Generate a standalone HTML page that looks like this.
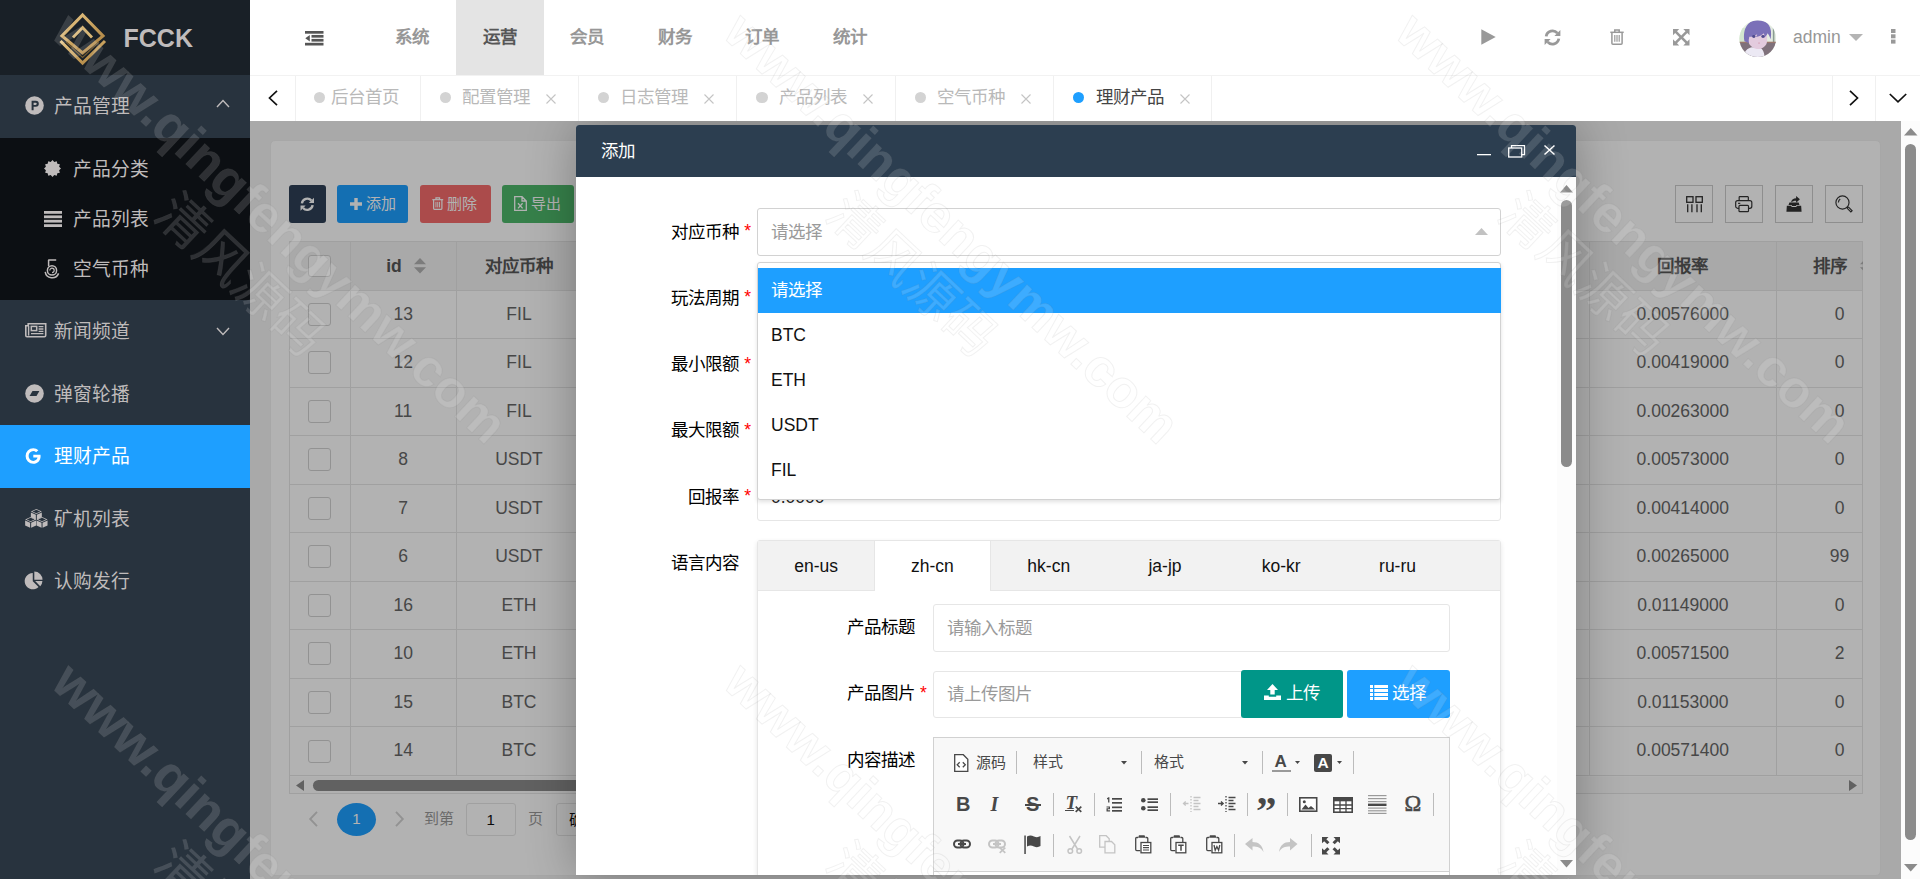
<!DOCTYPE html>
<html lang="zh-CN"><head><meta charset="utf-8"><title>FCCK</title><style>
*{margin:0;padding:0;box-sizing:border-box}
html,body{width:1920px;height:879px;overflow:hidden;background:#fff}
body{font-family:"Liberation Sans",sans-serif;font-size:17.5px;color:#333;position:relative}
.a{position:absolute}
.t{position:absolute;white-space:nowrap;line-height:24px;height:24px}
.b{font-weight:bold}
svg{position:absolute;overflow:visible}
#side{left:0;top:0;width:250px;height:879px;background:#28333e}
#logo{left:0;top:0;width:250px;height:75px;background:#192027}
#sub{left:0;top:137.5px;width:250px;height:162.5px;background:#0c0f13}
#act{left:0;top:425px;width:250px;height:62.5px;background:#1e9fff}
.m{color:#bfbbbb;font-size:18.75px}
#hdr{left:250px;top:0;width:1670px;height:75px;background:#fff}
#nthis{left:456px;top:0;width:87.5px;height:75px;background:#e4e4e4}
.n{color:#979797;font-weight:bold;font-size:17.5px}
#tabs{left:250px;top:75px;width:1670px;height:46px;background:#fff;border-top:1px solid #f2f2f2}
.vl{position:absolute;top:76px;width:1px;height:45px;background:#f0f0f0}
.tt{color:#b9b9b9;font-size:17.5px}
.dot{position:absolute;width:11.25px;height:11.25px;border-radius:50%;background:#d3d3d3;top:91.8px}
#frame{left:250px;top:121px;width:1650.5px;height:758px;background:#f2f2f2;overflow:hidden}
#card{left:19.5px;top:19px;width:1611.5px;height:735.6px;background:#fff;border-radius:5px;border:1px solid #f0f0f0}
#mask{left:0;top:0;width:1650.5px;height:758px;background:rgba(0,0,0,.3)}
.btn{position:absolute;top:64px;height:37.5px;border-radius:3px;color:#fff;font-size:15px}
.tb{position:absolute;top:64px;width:37.5px;height:37.5px;border:1px solid #ccc}
.th{color:#565656;font-weight:bold}
.td{color:#666}
.hl{position:absolute;height:1px;background:#e6e6e6}
.vt{position:absolute;width:1px;background:#e6e6e6}
.cb{position:absolute;width:22.5px;height:22.5px;border:1px solid #d2d2d2;border-radius:3px;background:#fff}
#modal{left:325.5px;top:4px;width:1000.25px;height:749.8px;background:#fff;box-shadow:1px 1px 50px rgba(0,0,0,.3);border-radius:3px 3px 0 0}
#mtitle{left:0;top:0;width:1000.25px;height:52px;background:#2c3e50;border-radius:3px 3px 0 0}
#mbody{left:0;top:52px;width:1000.25px;height:697.8px;overflow:hidden;background:#fff}
.lab{color:#000;font-size:17.5px}
.red{color:#f00}
.inp{position:absolute;border:1px solid #e6e6e6;border-radius:3px;background:#fff}
.ph{color:#9a9a9a}
.sb{position:absolute;background:#fcfcfc}
.thumb{position:absolute;background:#8b8b8b;border-radius:6px}
.wm{position:absolute;white-space:nowrap;transform-origin:0 0;color:rgba(255,255,255,.14);-webkit-text-stroke:1px rgba(120,120,120,.10);pointer-events:none}
</style></head><body>
<div id="side" class="a">
<div id="logo" class="a"></div>
<svg style="left:58px;top:12px" width="50" height="54" viewBox="0 0 50 54">
<defs><linearGradient id="g1" x1="0" y1="0" x2="1" y2="1"><stop offset="0" stop-color="#e9c98b"/><stop offset=".5" stop-color="#c9a25e"/><stop offset="1" stop-color="#a67c3c"/></linearGradient></defs>
<path d="M24.6 3 L45 24 L24.6 41 L4 24 Z" fill="none" stroke="url(#g1)" stroke-width="3.1" stroke-linejoin="miter"/>
<path d="M15 25.5 L24.6 15.5 L34 25.5" fill="none" stroke="#d9b776" stroke-width="2.8"/>
<path d="M2.5 29 L24.6 51 L47 29" fill="none" stroke="url(#g1)" stroke-width="3.1"/>
<path d="M8 30 L24.6 45.5 L41 30" fill="none" stroke="#8a6a35" stroke-width="1.2" opacity=".8"/>
</svg>
<div class="t b" style="left:123.5px;top:23.20px;color:#bfbbbb;font-size:25px;line-height:30px;height:30px">FCCK</div>
<div id="sub" class="a"></div><div id="act" class="a"></div>
<div class="t m" style="left:53.5px;top:94.80px;">产品管理</div>
<div class="t m" style="left:72.75px;top:157.80px;">产品分类</div>
<div class="t m" style="left:72.75px;top:207.80px;">产品列表</div>
<div class="t m" style="left:72.75px;top:257.80px;">空气币种</div>
<div class="t m" style="left:53.5px;top:320.30px;">新闻频道</div>
<div class="t m" style="left:53.5px;top:382.80px;">弹窗轮播</div>
<div class="t m" style="left:53.5px;top:445.30px;color:#fff">理财产品</div>
<div class="t m" style="left:53.5px;top:507.80px;">矿机列表</div>
<div class="t m" style="left:53.5px;top:570.30px;">认购发行</div>
<svg style="left:24.5px;top:96px" width="19" height="19" viewBox="0 0 19 19"><circle cx="9.5" cy="9.5" r="9.3" fill="#bfbbbb"/><path d="M6.6 4.8h4.2a3 3 0 0 1 0 6H8.6v3.4h-2z M8.6 6.7v2.3h2a1.15 1.15 0 0 0 0-2.3z" fill="#28333e" fill-rule="evenodd"/></svg>
<svg style="left:216px;top:98.5px" width="14" height="9" viewBox="0 0 14 9"><path d="M1 8 L7 1.6 L13 8" fill="none" stroke="#bfbbbb" stroke-width="1.4"/></svg>
<svg style="left:216px;top:327px" width="14" height="9" viewBox="0 0 14 9"><path d="M1 1 L7 7.4 L13 1" fill="none" stroke="#bfbbbb" stroke-width="1.4"/></svg>
<svg style="left:43.6px;top:160.3px" width="17" height="17" viewBox="0 0 16.4 16.4"><polygon points="16.40,8.20 14.58,9.91 15.30,12.30 12.87,12.87 12.30,15.30 9.91,14.58 8.20,16.40 6.49,14.58 4.10,15.30 3.53,12.87 1.10,12.30 1.82,9.91 0.00,8.20 1.82,6.49 1.10,4.10 3.53,3.53 4.10,1.10 6.49,1.82 8.20,0.00 9.91,1.82 12.30,1.10 12.87,3.53 15.30,4.10 14.58,6.49" fill="#bfbbbb"/></svg>
<svg style="left:43.6px;top:210.5px" width="18" height="16" viewBox="0 0 18 16"><g fill="#bfbbbb"><rect y="0" width="18" height="2.8"/><rect y="4.4" width="18" height="2.8"/><rect y="8.8" width="18" height="2.8"/><rect y="13.2" width="18" height="2.8"/></g></svg>
<svg style="left:44px;top:259px" width="16" height="20" viewBox="0 0 16 20"><g fill="none" stroke="#bfbbbb" stroke-width="1.5"><path d="M4.2 1h8"/><path d="M4.6 1v6.2"/><circle cx="8" cy="11.4" r="4.6"/><path d="M1.2 12.8a7 7 0 0 0 13.4 1.6"/><path d="M5.8 11.4a2.2 2.2 0 1 1 2.2 2.2" stroke-width="1.2"/></g></svg>
<svg style="left:24.5px;top:322.5px" width="21.500" height="14.500" viewBox="0 0 21.500 14.500"><path d="M3.200 .8h17.500v11.700a1.200 1.200 0 0 1-1.200 1.200H2A1.200 1.200 0 0 1 .8 12.500V2.800h2.400z" fill="none" stroke="#bfbbbb" stroke-width="1.600"/><path d="M3.600 2.800v9.800" stroke="#bfbbbb" stroke-width="1.400"/><rect x="6.300" y="3.400" width="5.400" height="4.200" fill="none" stroke="#bfbbbb" stroke-width="1.500"/><g stroke="#bfbbbb" stroke-width="1.300"><path d="M13.600 3.700h4.800M13.600 6h4.800M13.600 8.300h4.800M6 10.700h12.400"/></g></svg>
<svg style="left:24.5px;top:384px" width="19" height="19" viewBox="0 0 19 19"><circle cx="9.500" cy="9.500" r="9.300" fill="#bfbbbb"/><path d="M4.600 11.900 L7.500 6.900 H14.400 L11.500 11.900z" fill="#28333e"/></svg>
<svg style="left:24.5px;top:447px" width="17" height="18" viewBox="0 0 17 18"><path d="M15.6 9.2c0 4.4-3 7.6-7.3 7.6A7.7 7.7 0 0 1 .6 9a7.7 7.7 0 0 1 7.7-7.8c2 0 3.700.750 5.050 2.000L11.100 5.300c-.8-.8-1.800-1.200-2.800-1.200A4.800 4.800 0 0 0 3.600 9a4.800 4.800 0 0 0 4.700 4.900c2.500 0 3.900-1.500 4.200-3.300H8.300V7.800h7.150c.1.450.15.900.15 1.400z" fill="#fff"/></svg>
<svg style="left:24.600px;top:509px" width="22.700" height="19" viewBox="0 0 22.700 19"><path d="M11.35 0l5.500 2.500l-5.500 2.500l-5.500-2.500z" fill="#bfbbbb"/><path d="M11.35 0.75l3.900 1.750l-3.900 1.750l-3.900-1.750z" fill="#28333e"/><path d="M5.85 3.4l5 2.300v5l-5-2.400z" fill="#bfbbbb"/><path d="M16.85 3.4l-5 2.300v5l5-2.400z" fill="#bfbbbb"/><path d="M5.65 8.1l5.500 2.500l-5.500 2.500l-5.500-2.500z" fill="#bfbbbb"/><path d="M5.65 8.85l3.900 1.750l-3.900 1.750l-3.900-1.750z" fill="#28333e"/><path d="M0.15000000000000036 11.5l5 2.300v5l-5-2.400z" fill="#bfbbbb"/><path d="M11.15 11.5l-5 2.300v5l5-2.400z" fill="#bfbbbb"/><path d="M17.05 8.1l5.500 2.500l-5.500 2.500l-5.500-2.500z" fill="#bfbbbb"/><path d="M17.05 8.85l3.900 1.750l-3.900 1.750l-3.900-1.750z" fill="#28333e"/><path d="M11.55 11.5l5 2.300v5l-5-2.400z" fill="#bfbbbb"/><path d="M22.55 11.5l-5 2.300v5l5-2.400z" fill="#bfbbbb"/></svg>
<svg style="left:24.800px;top:570.800px" width="18" height="18" viewBox="0 0 19 19"><path d="M8.200 2.100v8.600l6.100 6.100A8.600 8.600 0 1 1 8.200 2.100z" fill="#bfbbbb"/><path d="M9.800.5a8.700 8.700 0 0 1 8.700 8.700H9.800z" fill="#bfbbbb"/><path d="M10.700 10.600h7.700a8.600 8.600 0 0 1-2.300 5.400z" fill="#bfbbbb"/></svg>
</div>
<div id="hdr" class="a"></div><div id="nthis" class="a"></div>
<svg style="left:304.5px;top:30.600px" width="18.500" height="14.500" viewBox="0 0 18.500 14.500"><g fill="#565656"><rect x="0" y="0" width="18.500" height="2.700"/><rect x="6.500" y="3.950" width="12" height="2.700"/><rect x="6.500" y="7.900" width="12" height="2.700"/><rect x="0" y="11.800" width="18.500" height="2.700"/><path d="M.3 7.250 L4.800 4 V10.500z"/></g></svg>
<div class="t n" style="left:312.00px;width:200px;text-align:center;top:25.00px;">系统</div>
<div class="t n" style="left:399.50px;width:200px;text-align:center;top:25.00px;color:#565656">运营</div>
<div class="t n" style="left:487.00px;width:200px;text-align:center;top:25.00px;">会员</div>
<div class="t n" style="left:574.50px;width:200px;text-align:center;top:25.00px;">财务</div>
<div class="t n" style="left:662.00px;width:200px;text-align:center;top:25.00px;">订单</div>
<div class="t n" style="left:749.50px;width:200px;text-align:center;top:25.00px;">统计</div>
<svg style="left:1480.8px;top:29px" width="15" height="16" viewBox="0 0 15 16"><path d="M.3.3 L14.700 8 L.3 15.700z" fill="#999"/></svg>
<svg style="left:1544px;top:28.5px" width="17" height="17" viewBox="0 0 17 17"><g fill="none" stroke="#999" stroke-width="2.800"><path d="M2.200 7.400A6.400 6.400 0 0 1 13.400 4.200"/><path d="M14.800 9.600A6.400 6.400 0 0 1 3.600 12.800"/></g><path d="M16.400 1 V7 H10.400z" fill="#999"/><path d="M.6 16 V10 H6.600z" fill="#999"/></svg>
<svg style="left:1610px;top:28.5px" width="14" height="16" viewBox="0 0 14 16"><g fill="none" stroke="#999" stroke-width="1.5"><path d="M.3 3.300h13.400"/><path d="M4.800 3V1h4.400v2"/><path d="M1.900 3.600v10.600a1 1 0 0 0 1 1h8.200a1 1 0 0 0 1-1V3.600"/></g><g stroke="#999" stroke-width="1.2"><path d="M4.800 6v6.800M7 6v6.800M9.200 6v6.800"/></g></svg>
<svg style="left:1673px;top:29px" width="16.5" height="16.5" viewBox="0 0 16 16"><g fill="#999"><path d="M0 0h6L3.900 2.100 8 6.200 12.100 2.100 10 0h6v6l-2.100-2.100L9.800 8l4.100 4.100L16 10v6h-6l2.100-2.100L8 9.800 3.900 13.900 6 16H0v-6l2.100 2.100L6.200 8 2.100 3.900 0 6z"/></g></svg>
<svg style="left:1738.5px;top:20px" width="37.500" height="37.500" viewBox="0 0 38 38"><defs><clipPath id="av"><circle cx="19" cy="19" r="18.600"/></clipPath></defs><g clip-path="url(#av)"><rect width="38" height="38" fill="#e4eee0"/><rect x="0" y="8" width="7" height="15" fill="#d3e6cf"/><rect x="31" y="6" width="7" height="17" fill="#e3ebe2"/><rect x="34.300" y="6" width="1.600" height="17" fill="#8a9c92"/><rect y="22.600" width="38" height="16" fill="#7f717b"/><rect y="22" width="38" height="1.200" fill="#9a7468"/><path d="M4.500 38c.5-6 3.500-9.500 8.500-10.500l8 .5c3 1 4.500 4 5 10z" fill="#ece9f4"/><path d="M9.500 13c0-3 19-3 19 0v8c0 5-5 8.500-9 8.500S9.500 26 9.500 21z" fill="#e3cbde"/><path d="M5.500 21.500C3.500 9 9 0 19 0s15.500 7 13 19.500c-.8-2.500-1.800-4.500-3-6-1 2-2 3.500-3.500 4.500.3-1.500.3-3-.2-4.500-2 2-5 3.300-8.300 3.600.8-.8 1.300-1.700 1.500-2.700-2.500 1.800-5.500 2.700-8 2.600-.5 1.500-.8 3.500-.5 6.500-1.500-.5-3-1.200-4.500-2z" fill="#7b70b8"/><ellipse cx="15" cy="16.800" rx="1.700" ry="1.500" fill="#4f4a8c"/><ellipse cx="24.300" cy="16.800" rx="1.700" ry="1.500" fill="#4f4a8c"/><ellipse cx="20.300" cy="23.300" rx=".8" ry=".6" fill="#d08aa0"/></g></svg>
<div class="t " style="left:1793px;top:24.80px;color:#979797;font-size:17.5px">admin</div>
<svg style="left:1848.7px;top:34px" width="14" height="7" viewBox="0 0 14 7"><path d="M0 0h14L7 7z" fill="#b4b4b4"/></svg>
<svg style="left:1890.5px;top:28.700px" width="5" height="15" viewBox="0 0 5 15"><g fill="#999"><rect y="0" width="4.500" height="4"/><rect y="5.300" width="4.500" height="4"/><rect y="10.600" width="4.500" height="4"/></g></svg>
<div id="tabs" class="a"></div>
<div class="vl" style="left:295px"></div>
<div class="vl" style="left:420px"></div>
<div class="vl" style="left:578px"></div>
<div class="vl" style="left:736.4px"></div>
<div class="vl" style="left:894.6px"></div>
<div class="vl" style="left:1053px"></div>
<div class="vl" style="left:1211.4px"></div>
<div class="vl" style="left:1832px"></div>
<div class="vl" style="left:1875px"></div>
<svg style="left:268px;top:89.500px" width="10" height="16" viewBox="0 0 10 16"><path d="M9 .8 L1.500 8 L9 15.200" fill="none" stroke="#111" stroke-width="1.700"/></svg>
<svg style="left:1849px;top:89.500px" width="10" height="16" viewBox="0 0 10 16"><path d="M1 .8 L8.500 8 L1 15.200" fill="none" stroke="#111" stroke-width="1.700"/></svg>
<svg style="left:1889px;top:93px" width="18" height="10" viewBox="0 0 18 10"><path d="M.8 1 L9 8.800 L17.200 1" fill="none" stroke="#111" stroke-width="1.700"/></svg>
<div class="dot" style="left:313.7px"></div>
<div class="t tt" style="left:330.5px;top:85.00px;">后台首页</div>
<div class="dot" style="left:439.5px"></div>
<div class="t tt" style="left:462.0px;top:85.00px;">配置管理</div>
<svg style="left:546.0px;top:93.800px" width="10" height="10" viewBox="0 0 10 10"><path d="M.5.5 L9.500 9.500 M9.500.5 L.5 9.500" stroke="#c4c4c4" stroke-width="1.100"/></svg>
<div class="dot" style="left:597.9px"></div>
<div class="t tt" style="left:620.4px;top:85.00px;">日志管理</div>
<svg style="left:704.4px;top:93.800px" width="10" height="10" viewBox="0 0 10 10"><path d="M.5.5 L9.500 9.500 M9.500.5 L.5 9.500" stroke="#c4c4c4" stroke-width="1.100"/></svg>
<div class="dot" style="left:756.3px"></div>
<div class="t tt" style="left:778.8px;top:85.00px;">产品列表</div>
<svg style="left:862.8px;top:93.800px" width="10" height="10" viewBox="0 0 10 10"><path d="M.5.5 L9.500 9.500 M9.500.5 L.5 9.500" stroke="#c4c4c4" stroke-width="1.100"/></svg>
<div class="dot" style="left:914.7px"></div>
<div class="t tt" style="left:937.2px;top:85.00px;">空气币种</div>
<svg style="left:1021.2px;top:93.800px" width="10" height="10" viewBox="0 0 10 10"><path d="M.5.5 L9.500 9.500 M9.500.5 L.5 9.500" stroke="#c4c4c4" stroke-width="1.100"/></svg>
<div class="dot" style="left:1073.1px;background:#1e9fff"></div>
<div class="t tt" style="left:1095.6px;top:85.00px;color:#444">理财产品</div>
<svg style="left:1179.6px;top:93.800px" width="10" height="10" viewBox="0 0 10 10"><path d="M.5.5 L9.500 9.500 M9.500.5 L.5 9.500" stroke="#c4c4c4" stroke-width="1.100"/></svg>
<div id="frame" class="a">
<div id="card" class="a"></div>
<div class="btn" style="left:39px;width:37px;background:#2f4056"></div>
<svg style="left:50.2px;top:75.5px" width="14.5" height="14.5" viewBox="0 0 17 17"><g fill="none" stroke="#fff" stroke-width="2.800"><path d="M2.200 7.400A6.400 6.400 0 0 1 13.400 4.200"/><path d="M14.800 9.600A6.400 6.400 0 0 1 3.600 12.800"/></g><path d="M16.400 1 V7 H10.400z" fill="#fff"/><path d="M.6 16 V10 H6.600z" fill="#fff"/></svg>
<div class="btn" style="left:87px;width:70.75px;background:#1e9fff"></div>
<svg style="left:99.5px;top:76.5px" width="12" height="12" viewBox="0 0 12 12"><path d="M4.300 0h3.400v4.300H12v3.400H7.700V12H4.300V7.700H0V4.300h4.300z" fill="#fff"/></svg>
<div class="t " style="left:115.5px;top:70.70px;color:#fff;font-size:15px">添加</div>
<div class="btn" style="left:170px;width:70.75px;background:#f56c6c"></div>
<svg style="left:181.8px;top:76px" width="11.5" height="13" viewBox="0 0 14 16"><g fill="none" stroke="#fff" stroke-width="1.5"><path d="M.3 3.300h13.400"/><path d="M4.800 3V1h4.400v2"/><path d="M1.900 3.600v10.600a1 1 0 0 0 1 1h8.200a1 1 0 0 0 1-1V3.600"/></g><g stroke="#fff" stroke-width="1.2"><path d="M4.800 6v6.800M7 6v6.800M9.200 6v6.800"/></g></svg>
<div class="t " style="left:197.3px;top:70.70px;color:#fff;font-size:15px">删除</div>
<div class="btn" style="left:251.75px;width:72px;background:#4eb86b"></div>
<svg style="left:263.5px;top:75.3px" width="13" height="15" viewBox="0 0 13 15"><path d="M.7.700h7.300l4.300 4.300v9.300H.7z M8 .7v4.300h4.300" fill="none" stroke="#fff" stroke-width="1.300"/><path d="M4 7.200l4.600 5.200M8.600 7.200L4 12.400" stroke="#fff" stroke-width="1.300"/></svg>
<div class="t " style="left:280.5px;top:70.70px;color:#fff;font-size:15px">导出</div>
<div class="tb" style="left:1425px"></div>
<div class="tb" style="left:1475px"></div>
<div class="tb" style="left:1525px"></div>
<div class="tb" style="left:1575px"></div>
<svg style="left:1435.5px;top:74.5px" width="17" height="17" viewBox="0 0 17 17"><g fill="none" stroke="#333" stroke-width="1.300"><rect x=".7" y=".7" width="6.300" height="5.600"/><rect x="10" y=".7" width="6.300" height="5.600"/><path d="M1.700 8.300v8M5.900 8.300v8M11 8.300v8M15.300 8.300v8"/></g></svg>
<svg style="left:1484.5px;top:75px" width="17.500" height="16.500" viewBox="0 0 19 18"><g fill="none" stroke="#333" stroke-width="1.300"><path d="M4.500 5V1.400a.7.700 0 0 1 .7-.7h8.600a.7.700 0 0 1 .7.700V5"/><rect x=".7" y="5" width="17.600" height="8.400" rx="2.200"/><rect x="4.300" y="10.300" width="10.400" height="6.800" rx="1" fill="#fff"/><path d="M3.300 8h2.400"/></g></svg>
<svg style="left:1535.5px;top:74px" width="16" height="17.500" viewBox="0 0 19 20"><path d="M1 12.500h5.500v1.500h6v-1.500H18l.5 7H.5z" fill="#333"/><path d="M3 11.500l1-3h11l1 3h-4v1.300H7v-1.300z" fill="#333"/><path d="M6 8.500c.5-3.500 3-5 6-5V.8l4.500 4-4.500 4V6.300c-2.500 0-4.500.5-6 2.200z" fill="#333"/></svg>
<svg style="left:1585px;top:74px" width="18" height="18" viewBox="0 0 20 20"><g fill="none" stroke="#333" stroke-width="1.300"><circle cx="8.300" cy="8.300" r="7.300"/><path d="M3.800 8.300a4.500 4.500 0 0 1 2-3.800"/><path d="M13.600 13.600l1.400-.2 4 4-1.400 1.400-4-4z"/></g></svg>
<div class="a" style="left:39px;top:120.25px;width:1573.5px;height:48.75px;background:#f2f2f2"></div>
<div class="a" style="left:39px;top:120.25px;width:1573.5px;height:552.75px;border:1px solid #e6e6e6"></div>
<div class="hl" style="left:39px;top:169px;width:1573.5px"></div>
<div class="hl" style="left:39px;top:217px;width:1573.5px"></div>
<div class="hl" style="left:39px;top:266px;width:1573.5px"></div>
<div class="hl" style="left:39px;top:314px;width:1573.5px"></div>
<div class="hl" style="left:39px;top:363px;width:1573.5px"></div>
<div class="hl" style="left:39px;top:411px;width:1573.5px"></div>
<div class="hl" style="left:39px;top:460px;width:1573.5px"></div>
<div class="hl" style="left:39px;top:508px;width:1573.5px"></div>
<div class="hl" style="left:39px;top:557px;width:1573.5px"></div>
<div class="hl" style="left:39px;top:605px;width:1573.5px"></div>
<div class="hl" style="left:39px;top:654px;width:1573.5px"></div>
<div class="vt" style="left:100px;top:120.25px;height:533.75px"></div>
<div class="vt" style="left:206.25px;top:120.25px;height:533.75px"></div>
<div class="vt" style="left:331.5px;top:120.25px;height:533.75px"></div>
<div class="vt" style="left:1338.7px;top:120.25px;height:533.75px"></div>
<div class="vt" style="left:1526px;top:120.25px;height:533.75px"></div>
<div class="cb" style="left:58px;top:133.5px"></div>
<div class="t th" style="left:136.2px;top:132.50px;">id</div>
<svg style="left:163.7px;top:137px" width="12" height="16" viewBox="0 0 12 16"><path d="M0 6.300h12L6 0z M0 9.300h12L6 15.600z" fill="#b2b2b2"/></svg>
<div class="t th" style="left:169.00px;width:200px;text-align:center;top:132.50px;">对应币种</div>
<div class="t th" style="left:1332.80px;width:200px;text-align:center;top:132.50px;">回报率</div>
<div class="t th" style="left:1563px;top:132.50px;">排序</div>
<svg style="left:1610.3px;top:137px" width="12" height="16" viewBox="0 0 12 16"><path d="M0 6.300h12L6 0z M0 9.300h12L6 15.600z" fill="#b2b2b2"/></svg>
<div class="cb" style="left:58px;top:182px"></div>
<div class="t td" style="left:53.20px;width:200px;text-align:center;top:181.00px;">13</div>
<div class="t td" style="left:169.00px;width:200px;text-align:center;top:181.00px;">FIL</div>
<div class="t td" style="left:1332.80px;width:200px;text-align:center;top:181.00px;">0.00576000</div>
<div class="t td" style="left:1489.50px;width:200px;text-align:center;top:181.00px;">0</div>
<div class="cb" style="left:58px;top:230px"></div>
<div class="t td" style="left:53.20px;width:200px;text-align:center;top:229.00px;">12</div>
<div class="t td" style="left:169.00px;width:200px;text-align:center;top:229.00px;">FIL</div>
<div class="t td" style="left:1332.80px;width:200px;text-align:center;top:229.00px;">0.00419000</div>
<div class="t td" style="left:1489.50px;width:200px;text-align:center;top:229.00px;">0</div>
<div class="cb" style="left:58px;top:279px"></div>
<div class="t td" style="left:53.20px;width:200px;text-align:center;top:278.00px;">11</div>
<div class="t td" style="left:169.00px;width:200px;text-align:center;top:278.00px;">FIL</div>
<div class="t td" style="left:1332.80px;width:200px;text-align:center;top:278.00px;">0.00263000</div>
<div class="t td" style="left:1489.50px;width:200px;text-align:center;top:278.00px;">0</div>
<div class="cb" style="left:58px;top:327px"></div>
<div class="t td" style="left:53.20px;width:200px;text-align:center;top:326.00px;">8</div>
<div class="t td" style="left:169.00px;width:200px;text-align:center;top:326.00px;">USDT</div>
<div class="t td" style="left:1332.80px;width:200px;text-align:center;top:326.00px;">0.00573000</div>
<div class="t td" style="left:1489.50px;width:200px;text-align:center;top:326.00px;">0</div>
<div class="cb" style="left:58px;top:376px"></div>
<div class="t td" style="left:53.20px;width:200px;text-align:center;top:375.00px;">7</div>
<div class="t td" style="left:169.00px;width:200px;text-align:center;top:375.00px;">USDT</div>
<div class="t td" style="left:1332.80px;width:200px;text-align:center;top:375.00px;">0.00414000</div>
<div class="t td" style="left:1489.50px;width:200px;text-align:center;top:375.00px;">0</div>
<div class="cb" style="left:58px;top:424px"></div>
<div class="t td" style="left:53.20px;width:200px;text-align:center;top:423.00px;">6</div>
<div class="t td" style="left:169.00px;width:200px;text-align:center;top:423.00px;">USDT</div>
<div class="t td" style="left:1332.80px;width:200px;text-align:center;top:423.00px;">0.00265000</div>
<div class="t td" style="left:1489.50px;width:200px;text-align:center;top:423.00px;">99</div>
<div class="cb" style="left:58px;top:473px"></div>
<div class="t td" style="left:53.20px;width:200px;text-align:center;top:472.00px;">16</div>
<div class="t td" style="left:169.00px;width:200px;text-align:center;top:472.00px;">ETH</div>
<div class="t td" style="left:1332.80px;width:200px;text-align:center;top:472.00px;">0.01149000</div>
<div class="t td" style="left:1489.50px;width:200px;text-align:center;top:472.00px;">0</div>
<div class="cb" style="left:58px;top:521px"></div>
<div class="t td" style="left:53.20px;width:200px;text-align:center;top:520.00px;">10</div>
<div class="t td" style="left:169.00px;width:200px;text-align:center;top:520.00px;">ETH</div>
<div class="t td" style="left:1332.80px;width:200px;text-align:center;top:520.00px;">0.00571500</div>
<div class="t td" style="left:1489.50px;width:200px;text-align:center;top:520.00px;">2</div>
<div class="cb" style="left:58px;top:570px"></div>
<div class="t td" style="left:53.20px;width:200px;text-align:center;top:569.00px;">15</div>
<div class="t td" style="left:169.00px;width:200px;text-align:center;top:569.00px;">BTC</div>
<div class="t td" style="left:1332.80px;width:200px;text-align:center;top:569.00px;">0.01153000</div>
<div class="t td" style="left:1489.50px;width:200px;text-align:center;top:569.00px;">0</div>
<div class="cb" style="left:58px;top:619px"></div>
<div class="t td" style="left:53.20px;width:200px;text-align:center;top:617.00px;">14</div>
<div class="t td" style="left:169.00px;width:200px;text-align:center;top:617.00px;">BTC</div>
<div class="t td" style="left:1332.80px;width:200px;text-align:center;top:617.00px;">0.00571400</div>
<div class="t td" style="left:1489.50px;width:200px;text-align:center;top:617.00px;">0</div>
<div class="a" style="left:1612.7px;top:119px;width:16px;height:560px;background:#fff"></div>
<div class="a" style="left:40px;top:656px;width:1571.5px;height:16px;background:#fcfcfc"></div>
<svg style="left:46px;top:658.7px" width="8" height="11" viewBox="0 0 8 11"><path d="M8 0v11L0 5.500z" fill="#8b8b8b"/></svg>
<svg style="left:1598.5px;top:658.7px" width="8" height="11" viewBox="0 0 8 11"><path d="M0 0v11l8-5.500z" fill="#8b8b8b"/></svg>
<div class="thumb" style="left:63px;top:659px;width:700px;height:10.500px"></div>
<svg style="left:59px;top:690px" width="9" height="16" viewBox="0 0 9 16"><path d="M8 .8 L1.200 8 L8 15.200" fill="none" stroke="#d2d2d2" stroke-width="1.900"/></svg>
<div class="a" style="left:87px;top:682px;width:39px;height:33px;border-radius:50%;background:#1e9fff"></div>
<div class="t " style="left:6.50px;width:200px;text-align:center;top:685.80px;color:#fff;font-size:15px">1</div>
<svg style="left:144.5px;top:690px" width="9" height="16" viewBox="0 0 9 16"><path d="M1 .8 L7.800 8 L1 15.200" fill="none" stroke="#d2d2d2" stroke-width="1.900"/></svg>
<div class="t " style="left:173.5px;top:686.00px;color:#999;font-size:15px">到第</div>
<div class="a" style="left:216px;top:682px;width:49.5px;height:32.800px;border:1px solid #e6e6e6;border-radius:3px;background:#fff"></div>
<div class="t " style="left:140.70px;width:200px;text-align:center;top:686.70px;color:#111;font-size:15px">1</div>
<div class="t " style="left:278px;top:686.00px;color:#999;font-size:15px">页</div>
<div class="a" style="left:306px;top:682px;width:60px;height:32.800px;border:1px solid #e6e6e6;border-radius:3px;background:#fff"></div>
<div class="t " style="left:318.5px;top:686.50px;color:#111;font-size:15px">确定</div>
<div id="mask" class="a"></div>
<div id="modal" class="a">
<div id="mtitle" class="a"></div>
<div class="t " style="left:25.2px;top:14.30px;color:#fff;font-size:17.5px">添加</div>
<svg style="left:901.5px;top:28.5px" width="14" height="2" viewBox="0 0 14 2"><rect width="14" height="1.300" fill="#fff"/></svg>
<svg style="left:932.5px;top:20px" width="17" height="13" viewBox="0 0 17 13"><g fill="none" stroke="#fff" stroke-width="1.300"><rect x=".7" y="3" width="13" height="9"/><path d="M3.500 3V.7h13v9h-2.800"/></g></svg>
<svg style="left:968.2px;top:20px" width="11" height="10" viewBox="0 0 11 10"><path d="M.5.5 L10.500 9.500 M10.500.5 L.5 9.500" stroke="#fff" stroke-width="1.500"/></svg>
<div id="mbody" class="a">
<div class="t lab" style="left:-137.00px;width:300px;text-align:right;top:42.50px;">对应币种</div>
<div class="t red" style="left:168.7px;top:42.00px;font-size:17.5px">*</div>
<div class="inp" style="left:181.5px;top:31.0px;width:743.5px;height:47.5px;border-color:#d2d2d2"></div>
<div class="t lab" style="left:-137.00px;width:300px;text-align:right;top:108.75px;">玩法周期</div>
<div class="t red" style="left:168.7px;top:108.25px;font-size:17.5px">*</div>
<div class="inp" style="left:181.5px;top:97.25px;width:743.5px;height:47.5px;border-color:#e6e6e6"></div>
<div class="t lab" style="left:-137.00px;width:300px;text-align:right;top:175.00px;">最小限额</div>
<div class="t red" style="left:168.7px;top:174.50px;font-size:17.5px">*</div>
<div class="inp" style="left:181.5px;top:163.5px;width:743.5px;height:47.5px;border-color:#e6e6e6"></div>
<div class="t lab" style="left:-137.00px;width:300px;text-align:right;top:241.25px;">最大限额</div>
<div class="t red" style="left:168.7px;top:240.75px;font-size:17.5px">*</div>
<div class="inp" style="left:181.5px;top:229.75px;width:743.5px;height:47.5px;border-color:#e6e6e6"></div>
<div class="t lab" style="left:-137.00px;width:300px;text-align:right;top:307.50px;">回报率</div>
<div class="t red" style="left:168.7px;top:307.00px;font-size:17.5px">*</div>
<div class="inp" style="left:181.5px;top:296.0px;width:743.5px;height:47.5px;border-color:#e6e6e6"></div>
<div class="t ph" style="left:195.5px;top:42.80px;">请选择</div>
<svg style="left:899.0px;top:51.2px" width="13" height="7" viewBox="0 0 13 7"><path d="M0 7h13L6.500 0z" fill="#c2c2c2"/></svg>
<div class="t " style="left:195.5px;top:308.00px;color:#222">0.0000</div>
<div class="t lab" style="left:-137.00px;width:300px;text-align:right;top:374.00px;">语言内容</div>
<div class="a" style="left:181.5px;top:362.7px;width:743.5px;height:420px;border:1px solid #e6e6e6;border-radius:3px;background:#fff;box-shadow:0 2px 5px 0 rgba(0,0,0,.1)"></div>
<div class="a" style="left:182.5px;top:363.7px;width:741.5px;height:50.800px;background:#f2f2f2;border-bottom:1px solid #e6e6e6"></div>
<div class="a" style="left:298.0px;top:363.7px;width:117.5px;height:50.800px;background:#fff;border-left:1px solid #e6e6e6;border-right:1px solid #e6e6e6"></div>
<div class="t " style="left:140.70px;width:200px;text-align:center;top:376.70px;color:#111">en-us</div>
<div class="t " style="left:256.97px;width:200px;text-align:center;top:376.70px;color:#111">zh-cn</div>
<div class="t " style="left:373.24px;width:200px;text-align:center;top:376.70px;color:#111">hk-cn</div>
<div class="t " style="left:489.51px;width:200px;text-align:center;top:376.70px;color:#111">ja-jp</div>
<div class="t " style="left:605.78px;width:200px;text-align:center;top:376.70px;color:#111">ko-kr</div>
<div class="t " style="left:722.05px;width:200px;text-align:center;top:376.70px;color:#111">ru-ru</div>
<div class="t lab" style="left:39.00px;width:300px;text-align:right;top:437.50px;">产品标题</div>
<div class="inp" style="left:357.5px;top:426.5px;width:516.5px;height:48px"></div>
<div class="t ph" style="left:371.5px;top:438.50px;">请输入标题</div>
<div class="t lab" style="left:39.00px;width:300px;text-align:right;top:504.00px;">产品图片</div>
<div class="t red" style="left:344.5px;top:503.50px;">*</div>
<div class="inp" style="left:357.5px;top:493.5px;width:310px;height:47px;border-radius:3px 0 0 3px"></div>
<div class="t ph" style="left:371.5px;top:504.50px;">请上传图片</div>
<div class="a" style="left:665.5px;top:493.2px;width:102px;height:47.500px;background:#009688;border-radius:3px"></div>
<svg style="left:688.5px;top:507px" width="17" height="16" viewBox="0 0 17 16"><path d="M8.500 0 L14 6 H10.700 V10.500 H6.300 V6 H3z M0 11.500 H4.800 V12.800 H12.200 V11.500 H17 V16 H0z" fill="#fff"/></svg>
<div class="t " style="left:710.5px;top:503.50px;color:#fff;font-size:17.5px">上传</div>
<div class="a" style="left:771.5px;top:493.2px;width:102.500px;height:47.500px;background:#1e9fff;border-radius:3px"></div>
<svg style="left:794.5px;top:508px" width="18" height="15" viewBox="0 0 18 15"><g fill="#fff"><rect x="0" y="0" width="3" height="3"/><rect x="4.300" y="0" width="13.700" height="3"/><rect x="0" y="4" width="3" height="3"/><rect x="4.300" y="4" width="13.700" height="3"/><rect x="0" y="8" width="3" height="3"/><rect x="4.300" y="8" width="13.700" height="3"/><rect x="0" y="12" width="3" height="3"/><rect x="4.300" y="12" width="13.700" height="3"/></g></svg>
<div class="t " style="left:816.5px;top:503.50px;color:#fff;font-size:17.5px">选择</div>
<div class="t lab" style="left:39.00px;width:300px;text-align:right;top:571.00px;">内容描述</div>
<div class="a" style="left:357.5px;top:560px;width:516.500px;height:200px;border:1px solid #d1d1d1;background:#fff"></div>
<div class="a" style="left:358.5px;top:561px;width:514.500px;height:134px;background:#f8f8f8;border-bottom:1px solid #d1d1d1"></div>
<svg style="left:378.5px;top:577px" width="14.5" height="18" viewBox="0 0 14.500 18"><path d="M.7.700h8.600l4.500 4.500v12.100H.7z" fill="#fff" stroke="#484848" stroke-width="1.300"/><path d="M5.700 8.300l-2.500 2.500 2.500 2.500M8.800 8.300l2.500 2.500-2.500 2.500" fill="none" stroke="#484848" stroke-width="1.300"/></svg>
<div class="t " style="left:400.3px;top:574.00px;color:#484848;font-size:15px">源码</div>
<div class="a" style="left:440.5px;top:574.0px;width:1px;height:23px;background:#bcbcbc"></div>
<div class="t " style="left:457.5px;top:572.50px;color:#484848;font-size:15px">样式</div>
<svg style="left:545.8px;top:583.7px" width="6" height="3.5" viewBox="0 0 6 3.500"><path d="M0 0h6L3 3.500z" fill="#484848"/></svg>
<div class="a" style="left:565.0px;top:574.0px;width:1px;height:23px;background:#bcbcbc"></div>
<div class="t " style="left:578.5px;top:572.50px;color:#484848;font-size:15px">格式</div>
<svg style="left:666.0px;top:583.7px" width="6" height="3.5" viewBox="0 0 6 3.500"><path d="M0 0h6L3 3.500z" fill="#484848"/></svg>
<div class="a" style="left:686.2px;top:574.0px;width:1px;height:23px;background:#bcbcbc"></div>
<div class="t b" style="left:699.0px;top:572.5px;color:#484848;font-size:17px">A</div>
<div class="a" style="left:696.8px;top:593px;width:18.500px;height:2px;background:#9a9a9a"></div>
<svg style="left:719.0px;top:584.2px" width="5" height="3" viewBox="0 0 5 3"><path d="M0 0h5L2.500 3z" fill="#484848"/></svg>
<div class="a" style="left:738.5px;top:576.5px;width:18px;height:18px;background:#484848;border-radius:2px"></div>
<div class="t b" style="left:742.0px;top:573.5px;color:#fff;font-size:15.500px">A</div>
<svg style="left:761.5px;top:584.2px" width="5" height="3" viewBox="0 0 5 3"><path d="M0 0h5L2.500 3z" fill="#484848"/></svg>
<div class="a" style="left:777.2px;top:574.0px;width:1px;height:23px;background:#bcbcbc"></div>
<div class="t b" style="left:380.5px;top:615px;color:#484848;font-size:20px;font-family:'Liberation Sans',sans-serif">B</div>
<div class="t b" style="left:415.0px;top:615px;color:#484848;font-size:20px;font-style:italic;font-family:'Liberation Serif',serif">I</div>
<div class="t b" style="left:450.5px;top:615px;color:#484848;font-size:20px">S</div>
<div class="a" style="left:449.0px;top:627.2px;width:16.500px;height:1.800px;background:#484848"></div>
<div class="a" style="left:477.0px;top:615.5px;width:1px;height:23px;background:#bcbcbc"></div>
<div class="t b" style="left:490.0px;top:613.5px;color:#484848;font-size:19px;font-style:italic;font-family:'Liberation Serif',serif">T</div>
<div class="a" style="left:489.2px;top:633px;width:9px;height:1.300px;background:#484848"></div>
<svg style="left:499.0px;top:629px" width="7" height="6.5" viewBox="0 0 7 6.500"><path d="M.7.700l5.600 5.100M6.300.7L.7 5.800" stroke="#484848" stroke-width="1.700"/></svg>
<div class="a" style="left:518.2px;top:615.5px;width:1px;height:23px;background:#bcbcbc"></div>
<svg style="left:530.8px;top:620px" width="16" height="15" viewBox="0 0 16 15"><g fill="#484848"><rect x="6" y="1" width="10" height="1.700"/><rect x="6" y="5" width="10" height="1.700"/><rect x="6" y="9.500" width="10" height="1.700"/><rect x="6" y="13" width="10" height="1.700"/><path d="M1 1.200l1.400-1h1v5.300h-1.300V2l-1.100.6z"/><path d="M.5 9.500h3.500v2.800H1.800v1h2.300v1.200H.5v-3.300h2.300v-.6H.5z"/></g></svg>
<svg style="left:565.5px;top:620px" width="17" height="15" viewBox="0 0 17 15"><g fill="#484848"><circle cx="2.300" cy="3.300" r="2.300"/><circle cx="2.300" cy="11.300" r="2.300"/><rect x="6.500" y="1.300" width="10.500" height="1.700"/><rect x="6.500" y="4.300" width="10.500" height="1.700"/><rect x="6.500" y="9.300" width="10.500" height="1.700"/><rect x="6.500" y="12.300" width="10.500" height="1.700"/></g></svg>
<div class="a" style="left:594.5px;top:615.5px;width:1px;height:23px;background:#bcbcbc"></div>
<svg style="left:607.0px;top:619px" width="17.5" height="16" viewBox="0 0 17.500 16"><g fill="none" stroke="#c4c4c4" stroke-width="1.300"><path d="M8 0v16" stroke-dasharray="1.500 1.500"/><path d="M5.500 7.500h-5M2.700 5.500L.5 7.500l2.200 2"/><path d="M10.500 1.500h7M10.500 4.500h5M10.500 7.500h7M10.500 10.500h5M10.500 13.500h7"/></g></svg>
<svg style="left:642.0px;top:619px" width="17.5" height="16" viewBox="0 0 17.500 16"><g fill="none" stroke="#484848" stroke-width="1.300"><path d="M8 0v16" stroke-dasharray="1.500 1.500"/><path d="M0 7.500h5M3 5.500l2.200 2-2.200 2"/><path d="M10.500 1.500h7M10.500 4.500h5M10.500 7.500h7M10.500 10.500h5M10.500 13.500h7"/></g></svg>
<div class="a" style="left:671.2px;top:615.5px;width:1px;height:23px;background:#bcbcbc"></div>
<div class="t b" style="left:680.5px;top:613.3px;color:#484848;font-size:41px;line-height:41px;height:41px;font-family:'Liberation Serif',serif">”</div>
<div class="a" style="left:711.8px;top:615.5px;width:1px;height:23px;background:#bcbcbc"></div>
<svg style="left:723.5px;top:619.5px" width="18.5" height="15" viewBox="0 0 18.500 15"><rect x=".8" y=".8" width="16.900" height="13.400" fill="#fff" stroke="#484848" stroke-width="1.600"/><path d="M2.500 12.500l4-5 3 3.500 2.500-2 4 3.500z" fill="#484848"/><circle cx="5.300" cy="4.800" r="1.500" fill="#484848"/></svg>
<svg style="left:757.2px;top:619.5px" width="20" height="16" viewBox="0 0 20 16"><rect x=".8" y=".8" width="18.400" height="14.400" fill="#fff" stroke="#484848" stroke-width="1.600"/><rect x=".8" y=".8" width="18.400" height="3.500" fill="#484848"/><path d="M.8 8h18.400M.8 11.700h18.400M7 4v11.500M13 4v11.500" stroke="#484848" stroke-width="1.300"/></svg>
<svg style="left:792.8px;top:617.7px" width="18.5" height="19" viewBox="0 0 18.500 19"><g fill="#9a9a9a"><rect y="0" width="18.500" height="1.200"/><rect y="3" width="18.500" height="1.200"/><rect y="6" width="18.500" height="1.200"/><rect y="12.500" width="18.500" height="1.200"/><rect y="15.200" width="18.500" height="1.200"/><rect y="17.800" width="18.500" height="1.200"/></g><rect y="8.600" width="18.500" height="2.400" fill="#484848"/></svg>
<div class="t b" style="left:829.0px;top:615px;color:#484848;font-size:22.500px;font-weight:normal;-webkit-text-stroke:.5px #484848;font-family:'Liberation Serif',serif">Ω</div>
<div class="a" style="left:857.8px;top:615.5px;width:1px;height:23px;background:#bcbcbc"></div>
<svg style="left:377.5px;top:662px" width="18" height="10" viewBox="0 0 18 10"><g fill="none" stroke="#484848" stroke-width="2"><rect x="1" y="1.500" width="9.500" height="7" rx="3.500"/><rect x="7.500" y="1.500" width="9.500" height="7" rx="3.500"/></g><rect x="5" y="4" width="8" height="2" fill="#484848"/></svg>
<svg style="left:412.5px;top:662px" width="18" height="10" viewBox="0 0 18 10"><g fill="none" stroke="#c4c4c4" stroke-width="2"><rect x="1" y="1.500" width="9.500" height="7" rx="3.500"/><rect x="7.500" y="1.500" width="9.500" height="7" rx="3.500"/></g><rect x="5" y="4" width="8" height="2" fill="#c4c4c4"/></svg>
<svg style="left:423.5px;top:670px" width="7" height="6.5" viewBox="0 0 7 6.500"><path d="M.7.700l5.600 5.100M6.300.7L.7 5.800" stroke="#c4c4c4" stroke-width="1.700"/></svg>
<svg style="left:448.5px;top:658px" width="17" height="19" viewBox="0 0 17 19"><rect x=".3" y=".5" width="1.500" height="18.500" fill="#484848"/><path d="M3 1.500c3-1.500 4.500-1 7 0s4.500 .8 6.500-.5v10c-2 1.300-4 1.500-6.500.5s-4-1.500-7 0z" fill="#484848"/></svg>
<div class="a" style="left:477.0px;top:656.5px;width:1px;height:23px;background:#bcbcbc"></div>
<svg style="left:491.2px;top:659px" width="15.5" height="18" viewBox="0 0 15.500 18"><g fill="none" stroke="#c4c4c4" stroke-width="1.500"><path d="M2.500 0l8 13M13 0l-8 13"/><circle cx="3.300" cy="15" r="2.300"/><circle cx="12.200" cy="15" r="2.300"/></g></svg>
<svg style="left:523.5px;top:658px" width="16.5" height="18.5" viewBox="0 0 16.500 18.500"><g fill="#f8f8f8" stroke="#c4c4c4" stroke-width="1.300"><path d="M.7.700h6.500l3 3v8.500H.7z"/><path d="M6 6.500h6.500l3.300 3.300v8H6z"/></g></svg>
<svg style="left:559.8px;top:658px" width="16.5" height="18.5" viewBox="0 0 16.500 18.500"><path d="M4 .3h5.500l1 2.500H3z" fill="#484848"/><path d="M3 2.500H1.800a1.100 1.100 0 0 0-1.100 1.100v11a1.100 1.100 0 0 0 1.100 1.100h3.500M10.500 2.500h1.200a1.100 1.100 0 0 1 1.100 1.100V7" fill="none" stroke="#484848" stroke-width="1.300"/><rect x="6" y="7.500" width="9.800" height="10.300" fill="#fff" stroke="#484848" stroke-width="1.300"/><path d="M8 10.500h6M8 12.700h6M8 15h6" stroke="#484848" stroke-width="1.200"/></svg>
<svg style="left:594.8px;top:658px" width="16.5" height="18.5" viewBox="0 0 16.500 18.500"><path d="M4 .3h5.500l1 2.500H3z" fill="#484848"/><path d="M3 2.500H1.800a1.100 1.100 0 0 0-1.100 1.100v11a1.100 1.100 0 0 0 1.100 1.100h3.500M10.500 2.500h1.200a1.100 1.100 0 0 1 1.100 1.100V7" fill="none" stroke="#484848" stroke-width="1.300"/><rect x="6" y="7.500" width="9.800" height="10.300" fill="#fff" stroke="#484848" stroke-width="1.300"/><path d="M8.200 10.300h5.500M11 10.300v5.500" stroke="#484848" stroke-width="1.500" fill="none"/></svg>
<svg style="left:630.0px;top:658px" width="16.5" height="18.5" viewBox="0 0 16.500 18.500"><path d="M4 .3h5.500l1 2.500H3z" fill="#484848"/><path d="M3 2.500H1.800a1.100 1.100 0 0 0-1.100 1.100v11a1.100 1.100 0 0 0 1.100 1.100h3.500M10.500 2.500h1.200a1.100 1.100 0 0 1 1.100 1.100V7" fill="none" stroke="#484848" stroke-width="1.300"/><rect x="6" y="7.500" width="9.800" height="10.300" fill="#fff" stroke="#484848" stroke-width="1.300"/><path d="M8 10l1.200 5.300 1.700-3.800 1.700 3.800L13.800 10" stroke="#484848" stroke-width="1.300" fill="none"/></svg>
<div class="a" style="left:658.0px;top:656.5px;width:1px;height:23px;background:#bcbcbc"></div>
<svg style="left:669.5px;top:661px" width="18.5" height="14" viewBox="0 0 18.500 14"><path d="M7.500 0v4c6 0 10 3 11 10-2.500-4.500-6-5.500-11-5.500v4L0 6z" fill="#c4c4c4"/></svg>
<svg style="left:703.8px;top:661px" width="18.5" height="14" viewBox="0 0 18.500 14"><path d="M11 0v4C5 4 1 7 0 14c2.500-4.500 6-5.500 11-5.500v4L18.500 6z" fill="#c4c4c4"/></svg>
<div class="a" style="left:735.2px;top:656.5px;width:1px;height:23px;background:#bcbcbc"></div>
<svg style="left:746.2px;top:659.5px" width="18" height="17.5" viewBox="0 0 18 17.500"><g fill="#484848"><path d="M0 0h6.500L4.300 2.200 7.500 5.200 5.300 7.300 2.200 4.200 0 6.300z"/><path d="M18 0v6.300l-2.200-2.100-3.100 3.100-2.200-2.100 3.200-3L11.500 0z"/><path d="M0 17.500v-6.300l2.200 2.100 3.100-3.100 2.200 2.100-3.200 3 2.200 2.200z"/><path d="M18 17.500h-6.500l2.200-2.200-3.200-3 2.200-2.100 3.100 3.100 2.200-2.100z"/></g></svg>
<div class="a" style="left:181.2px;top:85px;width:744.600px;height:237.800px;border:1px solid #d2d2d2;border-radius:3px;background:#fff;box-shadow:0 2px 4px rgba(0,0,0,.12)"></div>
<div class="a" style="left:182.0px;top:91px;width:743px;height:45px;background:#1e9fff"></div>
<div class="t " style="left:195.5px;top:101.20px;color:#fff">请选择</div>
<div class="t " style="left:195.5px;top:146.00px;color:#111">BTC</div>
<div class="t " style="left:195.5px;top:191.00px;color:#111">ETH</div>
<div class="t " style="left:195.5px;top:236.00px;color:#111">USDT</div>
<div class="t " style="left:195.5px;top:281.00px;color:#111">FIL</div>
<div class="sb" style="left:981.0px;top:0;width:19.500px;height:698.500px"></div>
<svg style="left:984.5px;top:8px" width="13" height="7.500" viewBox="0 0 13 7.500"><path d="M0 7.500h13L6.500 0z" fill="#8b8b8b"/></svg>
<svg style="left:984.5px;top:683px" width="13" height="7.500" viewBox="0 0 13 7.500"><path d="M0 0h13L6.500 7.500z" fill="#8b8b8b"/></svg>
<div class="thumb" style="left:985.5px;top:23px;width:11px;height:266.500px"></div>
</div>
</div>
</div>
<div class="sb" style="left:1900.5px;top:121px;width:19.5px;height:758px"></div>
<svg style="left:1904.100px;top:128.300px" width="13.500" height="7.500" viewBox="0 0 13.500 7.500"><path d="M0 7.500h13.500L6.750 0z" fill="#8b8b8b"/></svg>
<svg style="left:1904.100px;top:864px" width="13.500" height="7.500" viewBox="0 0 13.500 7.500"><path d="M0 0h13.500L6.750 7.500z" fill="#8b8b8b"/></svg>
<div class="thumb" style="left:1904.500px;top:144px;width:11px;height:696px"></div>
<div class="wm b" style="left:80.0px;top:3.1999999999999993px;font-size:53px;line-height:53px;transform:rotate(43.2deg)">www.qingfengymw.com</div>
<div class="wm" style="left:182.0px;top:184.7px;font-size:52px;line-height:52px;font-weight:500;transform:rotate(43.2deg)">清风源码</div>
<div class="wm b" style="left:80.0px;top:652.5px;font-size:53px;line-height:53px;transform:rotate(43.2deg)">www.qingfengymw.com</div>
<div class="wm" style="left:182.0px;top:834.0px;font-size:52px;line-height:52px;font-weight:500;transform:rotate(43.2deg)">清风源码</div>
<div class="wm b" style="left:752.2px;top:3.1999999999999993px;font-size:53px;line-height:53px;transform:rotate(43.2deg)">www.qingfengymw.com</div>
<div class="wm" style="left:854.2px;top:184.7px;font-size:52px;line-height:52px;font-weight:500;transform:rotate(43.2deg)">清风源码</div>
<div class="wm b" style="left:752.2px;top:652.5px;font-size:53px;line-height:53px;transform:rotate(43.2deg)">www.qingfengymw.com</div>
<div class="wm" style="left:854.2px;top:834.0px;font-size:52px;line-height:52px;font-weight:500;transform:rotate(43.2deg)">清风源码</div>
<div class="wm b" style="left:1424.4px;top:3.1999999999999993px;font-size:53px;line-height:53px;transform:rotate(43.2deg)">www.qingfengymw.com</div>
<div class="wm" style="left:1526.4px;top:184.7px;font-size:52px;line-height:52px;font-weight:500;transform:rotate(43.2deg)">清风源码</div>
<div class="wm b" style="left:1424.4px;top:652.5px;font-size:53px;line-height:53px;transform:rotate(43.2deg)">www.qingfengymw.com</div>
<div class="wm" style="left:1526.4px;top:834.0px;font-size:52px;line-height:52px;font-weight:500;transform:rotate(43.2deg)">清风源码</div>
</body></html>
